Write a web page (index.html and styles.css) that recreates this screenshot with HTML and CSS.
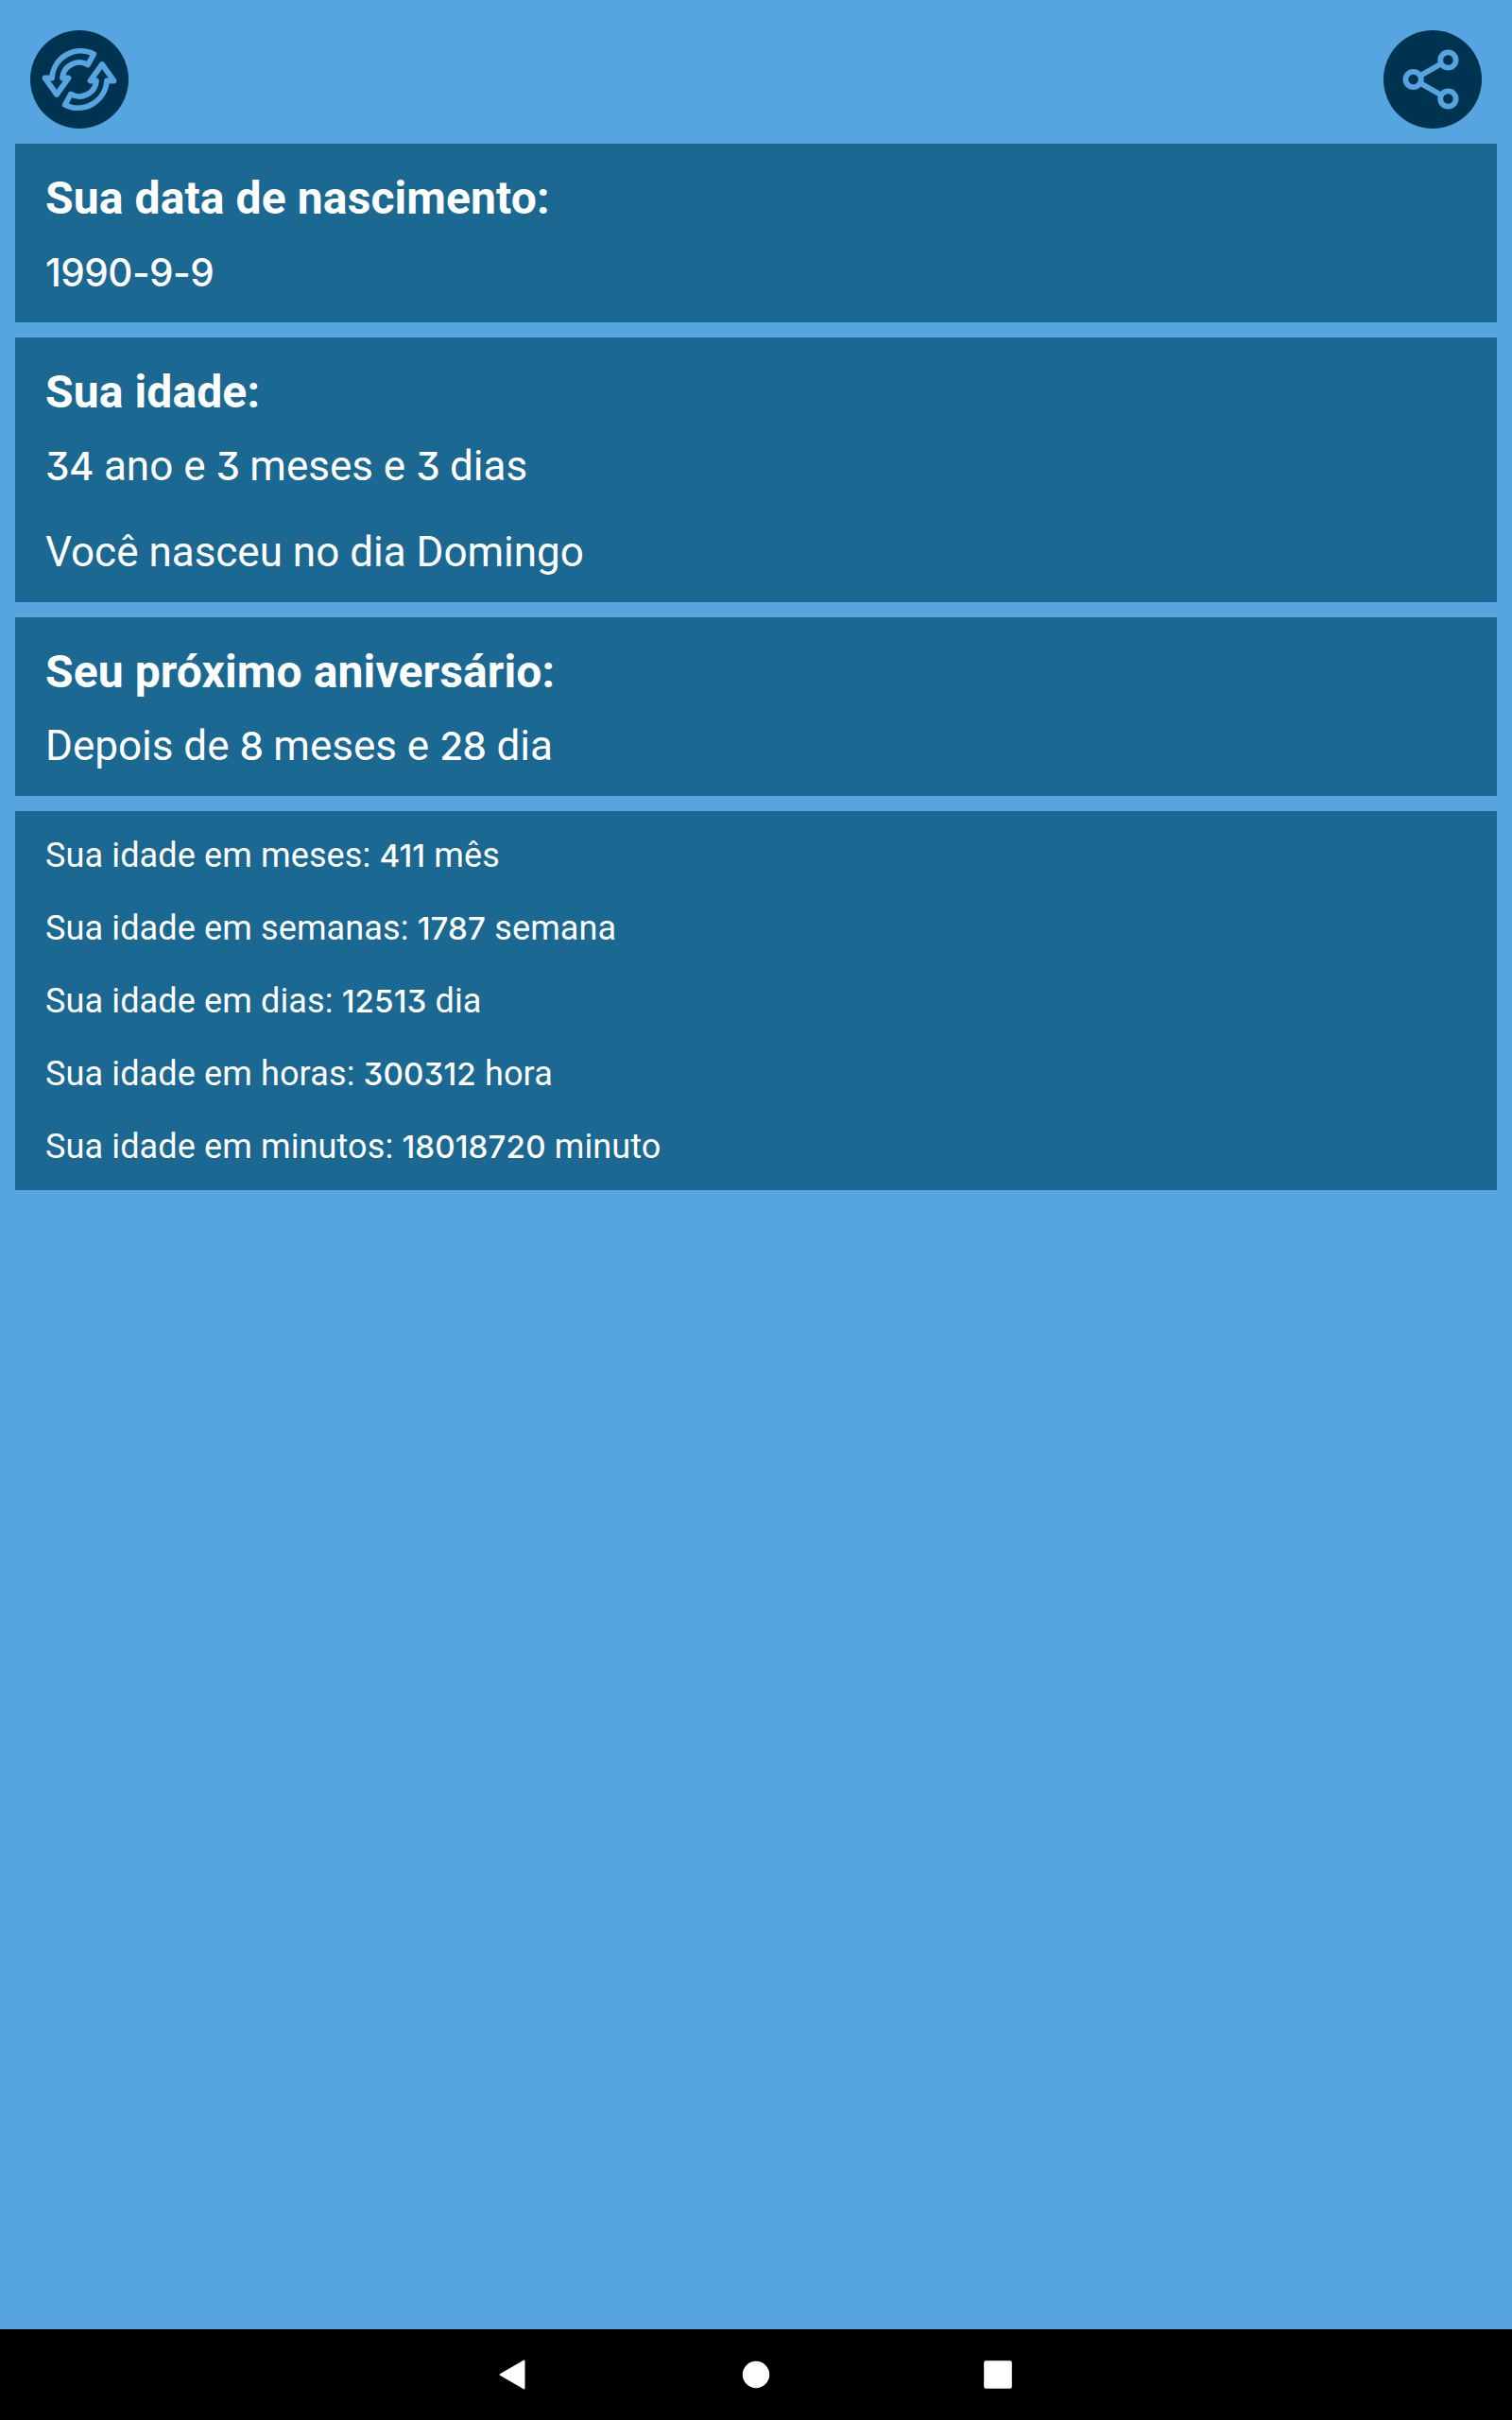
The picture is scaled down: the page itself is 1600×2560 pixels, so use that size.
FILE: index.html
```html
<!DOCTYPE html>
<html lang="pt">
    <head>
        <meta charset="UTF-8" />
        <meta name="viewport" content="width=device-width, initial-scale=1.0" />
        <title>Sua idade</title>
        <link rel="stylesheet" href="styles.css">
    </head>
    <body>
        <header class="toolbar">
            <button type="button" class="round-btn" aria-label="Recalcular">
                <svg viewBox="0 0 104 104">
                    <path d="M67.3 25.2A30.5 30.5 0 0 0 23 50.5H15.5L28 68L40.5 50.5H34A18 18 0 0 1 61 36.5Z" />
                    <path d="M67.3 25.2A30.5 30.5 0 0 0 23 50.5H15.5L28 68L40.5 50.5H34A18 18 0 0 1 61 36.5Z" transform="rotate(180 52 52)" />
                </svg>
            </button>
            <button type="button" class="round-btn" aria-label="Compartilhar">
                <svg viewBox="0 0 104 104">
                    <path d="M61 35.5L39 48M39 56L61 68.5" />
                    <circle cx="31.6" cy="52" r="8.2" />
                    <circle cx="68.4" cy="31.5" r="8.2" />
                    <circle cx="68.4" cy="72.5" r="8.2" />
                </svg>
            </button>
        </header>

        <main>
            <section class="card">
                <h2>Sua data de nascimento:</h2>
                <p><span class="num">1990-9-9</span></p>
            </section>
            <section class="card">
                <h2>Sua idade:</h2>
                <p><span class="num">34</span> ano e <span class="num">3</span> meses e <span class="num">3</span> dias</p>
                <p>Você nasceu no dia Domingo</p>
            </section>
            <section class="card">
                <h2>Seu próximo aniversário:</h2>
                <p>Depois de <span class="num">8</span> meses e <span class="num">28</span> dia</p>
            </section>
            <ul class="card totals">
                <li>Sua idade em meses: <span class="num">411</span> mês</li>
                <li>Sua idade em semanas: <span class="num">1787</span> semana</li>
                <li>Sua idade em dias: <span class="num">12513</span> dia</li>
                <li>Sua idade em horas: <span class="num">300312</span> hora</li>
                <li>Sua idade em minutos: <span class="num">18018720</span> minuto</li>
            </ul>
        </main>

        <nav class="navbar">
            <svg viewBox="0 0 32 32"><path d="M1.5 16L26.5 1.5V30.5Z" /></svg>
            <svg viewBox="0 0 32 32"><circle cx="16" cy="16" r="13.2" /></svg>
            <svg viewBox="0 0 32 32"><rect x="2.2" y="2.2" width="27.6" height="27.6" rx="1" /></svg>
        </nav>
    </body>
</html>
```
FILE: styles.css
```css
body {
    font-family: Roboto, sans-serif;
    background-color: #56a4e0;
    color: #fff;
    margin: 0;
    height: 100vh;
    display: flex;
    flex-direction: column;
}

.toolbar {
    display: flex;
    justify-content: space-between;
    padding: 32px 32px 16px;
}

.round-btn {
    width: 104px;
    height: 104px;
    padding: 0;
    border: none;
    border-radius: 50%;
    background-color: #00334f;
    cursor: pointer;
}

.round-btn svg {
    display: block;
    fill: none;
    stroke: #56a4e0;
    stroke-width: 5.8;
    stroke-linejoin: round;
}

main {
    flex: 1;
    display: flex;
    flex-direction: column;
    gap: 16px;
    padding: 0 16px;
}

.card {
    background-color: #1b6892;
    padding: 30px 32px 27px;
}

.card h2 {
    font-size: 48px;
    line-height: 56px;
    font-weight: bold;
    letter-spacing: 0.11px;
    margin: 0 0 24px;
}

.card p {
    font-size: 44px;
    line-height: 52px;
    margin: 0;
}

.card p + p {
    margin-top: 39px;
}

/* digits use a wider face with a flat-top three */
.num {
    font-family: Inter, sans-serif;
    font-size: 0.92em;
    font-weight: 500;
    line-height: 1;
    letter-spacing: -0.5px;
    font-feature-settings: "cv09";
}

.totals {
    list-style: none;
    margin: 0;
    padding: 9px 32px 7px;
}

.totals li {
    font-size: 36px;
    line-height: 77px;
    letter-spacing: 0.13px;
}

.totals .num {
    letter-spacing: 0.13px;
}

.navbar {
    height: 96px;
    background-color: #000;
    display: flex;
    justify-content: center;
    align-items: center;
    gap: 224px;
}

.navbar svg {
    width: 32px;
    height: 32px;
    fill: #fff;
    stroke: #fff;
    stroke-width: 2;
    stroke-linejoin: round;
}
```
